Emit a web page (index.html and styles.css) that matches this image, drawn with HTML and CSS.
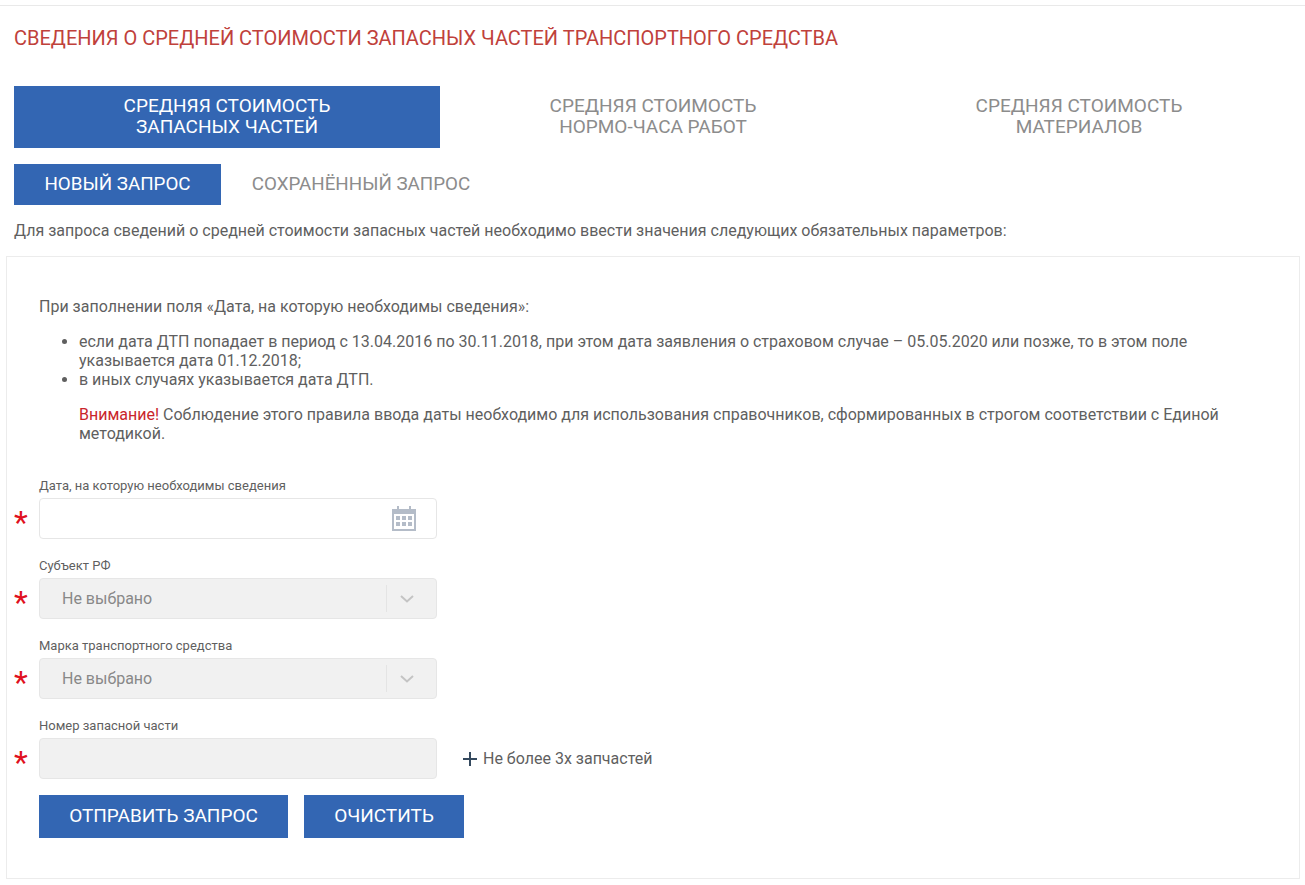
FILE: index.html
```html
<!DOCTYPE html>
<html lang="ru">

<head>
    <meta charset="UTF-8">
    <title>Сведения о средней стоимости запасных частей</title>
    <link rel="stylesheet" href="styles.css">
</head>

<body>
    <div class="page">
        <h1 class="title">Сведения о средней стоимости запасных частей транспортного средства</h1>

        <!-- вкладки -->
        <div class="tabs">
            <div class="tab active">Средняя стоимость<br>запасных частей</div>
            <div class="tab">Средняя стоимость<br>нормо-часа работ</div>
            <div class="tab">Средняя стоимость<br>материалов</div>
        </div>

        <div class="subtabs">
            <div class="subtab active">Новый запрос</div>
            <div class="subtab">Сохранённый запрос</div>
        </div>

        <p class="lead">Для запроса сведений о средней стоимости запасных частей необходимо ввести значения следующих обязательных параметров:</p>

        <!-- форма -->
        <div class="card">
            <p class="note">При заполнении поля «Дата, на которую необходимы сведения»:</p>
            <ul class="rules">
                <li>если дата ДТП попадает в период с 13.04.2016 по 30.11.2018, при этом дата заявления о страховом случае – 05.05.2020 или позже, то в этом поле указывается дата 01.12.2018;</li>
                <li>в иных случаях указывается дата ДТП.</li>
            </ul>
            <p class="warn"><span class="warn-mark">Внимание!</span> Соблюдение этого правила ввода даты необходимо для использования справочников, сформированных в строгом соответствии с Единой методикой.</p>

            <div class="field">
                <label class="label">Дата, на которую необходимы сведения</label>
                <div class="row">
                    <span class="star">*</span>
                    <div class="input">
                        <svg class="calendar" width="24" height="25" viewBox="0 0 24 25">
                            <path fill="#b4bcc8" d="M0 3h5V0h2v3h10V0h2v3h5v22H0zM2 8v15h20V8z"/>
                            <path fill="#b4bcc8" d="M4 10h4v4H4zM10 10h4v4h-4zM16 10h4v4h-4zM4 16h4v4H4zM10 16h4v4h-4zM16 16h4v4h-4z"/>
                        </svg>
                    </div>
                </div>
            </div>

            <div class="field">
                <label class="label">Субъект РФ</label>
                <div class="row">
                    <span class="star">*</span>
                    <div class="input disabled">
                        <span class="value">Не выбрано</span>
                        <span class="select-btn">
                            <svg width="14" height="8" viewBox="0 0 14 8"><path d="M1 1l6 5.5L13 1" fill="none" stroke="#c4c4c4" stroke-width="2"/></svg>
                        </span>
                    </div>
                </div>
            </div>

            <div class="field">
                <label class="label">Марка транспортного средства</label>
                <div class="row">
                    <span class="star">*</span>
                    <div class="input disabled">
                        <span class="value">Не выбрано</span>
                        <span class="select-btn">
                            <svg width="14" height="8" viewBox="0 0 14 8"><path d="M1 1l6 5.5L13 1" fill="none" stroke="#c4c4c4" stroke-width="2"/></svg>
                        </span>
                    </div>
                </div>
            </div>

            <div class="field">
                <label class="label">Номер запасной части</label>
                <div class="row">
                    <span class="star">*</span>
                    <div class="input disabled"></div>
                    <div class="add">
                        <svg width="14" height="14" viewBox="0 0 14 14"><path d="M6 0h2v6h6v2H8v6H6V8H0V6h6z" fill="#34495e"/></svg>
                        <span>Не более 3х запчастей</span>
                    </div>
                </div>
            </div>

            <div class="actions">
                <div class="btn btn-send">Отправить запрос</div>
                <div class="btn btn-clear">Очистить</div>
            </div>
        </div>
    </div>
</body>

</html>
```

FILE: styles.css
```css
* {
    box-sizing: border-box;
}

body {
    margin: 0;
    background: #fff;
    font-family: Roboto, "Liberation Sans", sans-serif;
    color: #5f5f5f;
}

.page {
    border-top: 1px solid #e9e9e9;
    margin-top: 5px;
    padding: 0 5px 0 6px;
}

.title {
    margin: 20px 0 0 8px;
    font-size: 20px;
    line-height: 24px;
    font-weight: 400;
    text-transform: uppercase;
    color: #c0413b;
}

.tabs {
    display: flex;
    margin: 36px 0 0 8px;
}

.tab {
    width: 426px;
    height: 62px;
    padding-top: 9px;
    font-size: 19px;
    line-height: 21px;
    text-align: center;
    text-transform: uppercase;
    color: #8c8c8c;
}

.tab.active {
    background: #3366b3;
    color: #fff;
}

.subtabs {
    display: flex;
    margin: 16px 0 0 8px;
}

.subtab {
    width: 207px;
    height: 41px;
    line-height: 40px;
    font-size: 18.8px;
    text-align: center;
    text-transform: uppercase;
    color: #8c8c8c;
}

.subtab.active {
    background: #3366b3;
    color: #fff;
}

.subtab + .subtab {
    width: 280px;
}

.lead {
    margin: 16px 0 0 8px;
    font-size: 16px;
    line-height: 19px;
}

.card {
    margin-top: 16px;
    height: 623px;
    padding: 40px 32px 0;
    border: 1px solid #ececec;
}

.note {
    margin: 0;
    font-size: 16px;
    line-height: 19px;
}

.rules {
    margin: 16px 0 0;
    padding-left: 40px;
    font-size: 16px;
    line-height: 19px;
}

.warn {
    margin: 16px 0 0 40px;
    font-size: 16px;
    line-height: 19px;
}

.warn-mark {
    color: #c9252b;
}

.field {
    margin-top: 19px;
}

.warn + .field {
    margin-top: 35px;
}

.label {
    display: block;
    font-size: 13px;
    line-height: 16px;
    margin-bottom: 4px;
}

.row {
    position: relative;
    display: flex;
    align-items: center;
}

.star {
    position: absolute;
    left: -25px;
    top: 8px;
    font-size: 32px;
    line-height: 32px;
    color: #e01020;
}

.input {
    display: flex;
    align-items: center;
    justify-content: space-between;
    width: 398px;
    height: 41px;
    border: 1px solid #e6e6e6;
    border-radius: 4px;
    background: #fff;
}

.input.disabled {
    background: #f1f1f1;
}

.calendar {
    margin-left: auto;
    margin-right: 20px;
}

.value {
    padding-left: 22px;
    font-size: 16px;
    color: #888;
}

.select-btn {
    display: flex;
    align-items: center;
    justify-content: center;
    width: 50px;
    height: 27px;
    padding-right: 10px;
    border-left: 1px solid #e4e4e4;
}

.add {
    display: flex;
    align-items: center;
    gap: 6px;
    margin-left: 26px;
    font-size: 16px;
}

.actions {
    display: flex;
    gap: 16px;
    margin-top: 16px;
}

.btn {
    height: 43px;
    line-height: 42px;
    font-size: 19px;
    text-align: center;
    text-transform: uppercase;
    background: #3366b3;
    color: #fff;
}

.btn-send {
    width: 249px;
}

.btn-clear {
    width: 160px;
}
```
